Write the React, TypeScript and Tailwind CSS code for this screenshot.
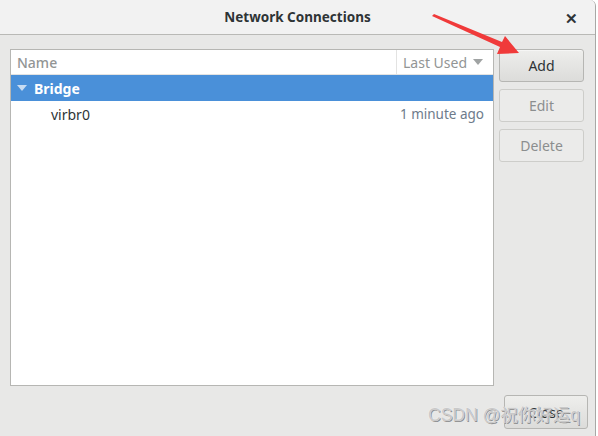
import React from "react";

const font = { fontFamily: '"Noto Sans", "Open Sans", "Noto Sans CJK SC", sans-serif' };

function Arrow() {
  return (
    <svg
      className="pointer-events-none absolute left-0 top-0"
      width="598"
      height="436"
      viewBox="0 0 598 436"
    >
      <polygon points="432,16 434,14 502,42 505,36 519,53 497,54 500,47" fill="#f03a3a" />
    </svg>
  );
}

function SideButton({ label, primary }: { label: string; primary?: boolean }) {
  return (
    <button
      type="button"
      className={
        primary
          ? "flex h-[33px] w-[85px] items-center justify-center rounded-[3px] border border-[#b6b6b3] bg-gradient-to-b from-[#eeeeec] to-[#dcdcda] text-[14px] text-[#2e3436] shadow-[inset_0_1px_0_#f6f6f5]"
          : "flex h-[33px] w-[85px] items-center justify-center rounded-[3px] border border-[#cdcdca] bg-[#ebebea] text-[14px] text-[#8b8e8f]"
      }
    >
      {label}
    </button>
  );
}

export default function App() {
  return (
    <div className="relative h-[436px] w-[598px] overflow-hidden bg-white" style={font}>
      <div className="flex h-full w-[596px] flex-col overflow-hidden rounded-tr-[6px] border-r border-[#a8a8a6] bg-[#e8e8e7]">
        <div className="relative flex h-[35px] shrink-0 items-center justify-center border-b border-[#b9b9b6] bg-[#f2f2f2]">
          <span className="text-[13.5px] font-bold text-[#2e3436]">Network Connections</span>
          <span className="absolute right-[17px] top-[7px] text-[15px] font-bold text-[#2e3436]">✕</span>
        </div>
        <div className="flex flex-1 flex-col px-[10px] pt-[14px]">
          <div className="flex gap-[5px]">
            <div className="flex h-[337px] w-[484px] flex-col border border-[#b6b6b3] bg-white">
              <div className="flex h-[25px] border-b border-[#e3e3e2] text-[14px] text-[#929595]">
                <div className="flex flex-1 items-center pl-[6px] font-medium">Name</div>
                <div className="flex w-[97px] items-center gap-[6px] border-l border-[#e3e3e2] pl-[6px]">
                  <span>Last Used</span>
                  <svg width="10" height="6" viewBox="0 0 10 6">
                    <polygon points="0,0 10,0 5,6" fill="#a0a3a3" />
                  </svg>
                </div>
              </div>
              <div className="flex h-[26px] items-center bg-[#4a90d9] pl-[6px] text-[14px] font-bold text-white">
                <svg width="10" height="7" viewBox="0 0 10 7" className="mr-[7px]">
                  <polygon points="0,0 10,0 5,6" fill="#c8dcf2" />
                </svg>
                Bridge
              </div>
              <div className="flex h-[26px] items-center justify-between pl-[40px] pr-[9px] text-[14px]">
                <span className="text-[#2e3436]">virbr0</span>
                <span className="text-[13.5px] text-[#6e7b8b]">1 minute ago</span>
              </div>
            </div>
            <div className="flex flex-col gap-[7px]">
              <SideButton label="Add" primary />
              <SideButton label="Edit" />
              <SideButton label="Delete" />
            </div>
          </div>
          <div className="flex justify-end pt-[9px]">
            <button
              type="button"
              className="mr-[-3px] flex h-[34px] w-[84px] items-center justify-center rounded-[3px] border border-[#b6b6b3] bg-gradient-to-b from-[#eeeeec] to-[#dcdcda] text-[14px] text-[#2e3436]"
            >
              Close
            </button>
          </div>
        </div>
      </div>
      <Arrow />
      <div
        className="pointer-events-none absolute left-[428px] top-[402px] text-[17.5px] text-[#c9c9c9]"
        style={{ textShadow: "0 0 1px #ffffff, 1px 1px 0 #8a8a8a", fontFamily: '"Liberation Sans", "Noto Sans CJK SC", sans-serif' }}
      >
        CSDN @祝你好运q
      </div>
    </div>
  );
}
